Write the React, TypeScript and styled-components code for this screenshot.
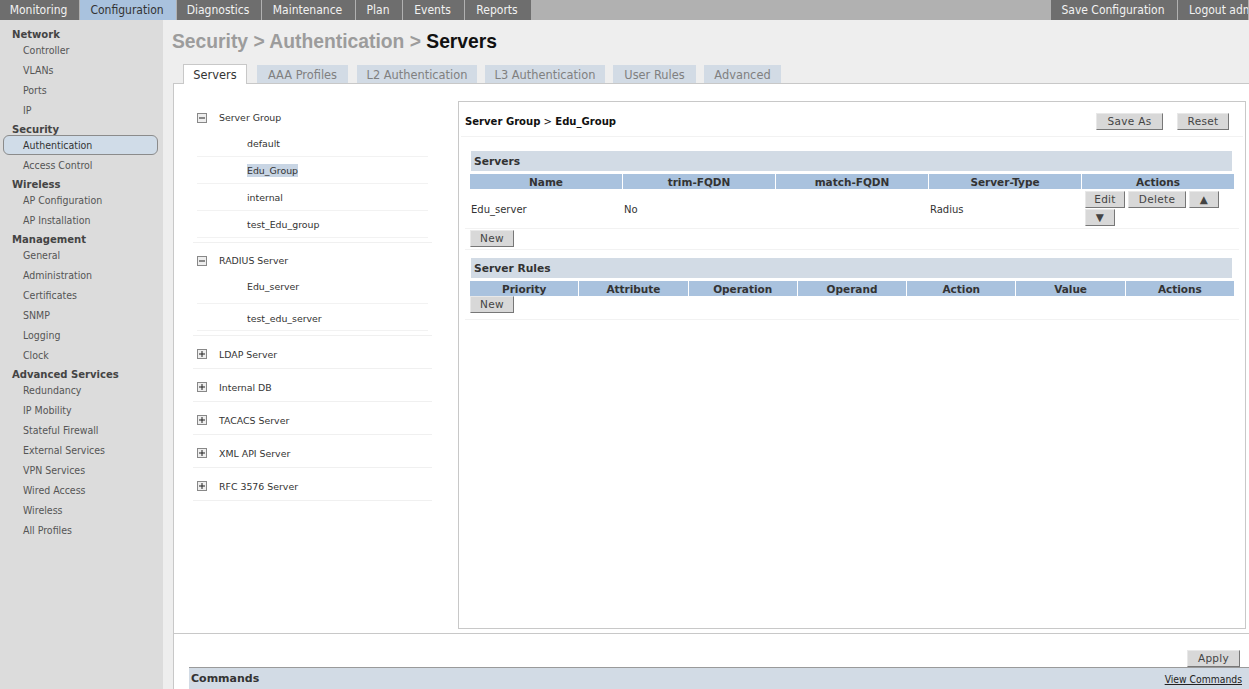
import React from "react";
import styled, { createGlobalStyle } from "styled-components";

const narrow = `"DejaVu Sans Condensed", "DejaVu Sans", Verdana, sans-serif`;

const GlobalStyle = createGlobalStyle`
  html, body {
    margin: 0;
    padding: 0;
    height: 100%;
    overflow: hidden;
    background: #fff;
    font-family: "DejaVu Sans", Verdana, sans-serif;
    font-size: 10px;
    color: #333;
  }
  * { box-sizing: border-box; }
`;

const Page = styled.div`
  width: 1249px;
  height: 689px;
  display: flex;
  flex-direction: column;
  overflow: hidden;
`;

const TopNav = styled.div`
  height: 20px;
  flex: none;
  display: flex;
  background: #b1b1b1;
`;

const NavTab = styled.div<{ $w: number; $active?: boolean; $left?: boolean }>`
  width: ${(p) => p.$w}px;
  flex: none;
  margin-right: 1px;
  padding: ${(p) => (p.$left ? "0 0 0 11px" : "0 2px 0 0")};
  text-align: ${(p) => (p.$left ? "left" : "center")};
  line-height: 21px;
  font-family: ${narrow};
  font-size: 12px;
  white-space: nowrap;
  overflow: hidden;
  background: ${(p) => (p.$active ? "#a9c2de" : "#6e6e6e")};
  color: ${(p) => (p.$active ? "#333" : "#f2f2f2")};
`;

const NavSpacer = styled.div`
  flex: 1;
`;

const Body = styled.div`
  flex: 1;
  display: flex;
  min-height: 0;
`;

const Sidebar = styled.nav`
  width: 163px;
  flex: none;
  padding-top: 5px;
  background: #dcdcdc;
`;

const SideHeading = styled.div`
  height: 15px;
  padding-left: 12px;
  line-height: 19px;
  font-family: ${narrow};
  font-size: 11.2px;
  font-weight: bold;
  color: #444;
  white-space: nowrap;
`;

const SideItem = styled.div<{ $active?: boolean }>`
  height: 20px;
  padding-left: 19px;
  margin: 0 5px 0 3px;
  line-height: 18px;
  font-family: ${narrow};
  font-size: 10.5px;
  color: ${(p) => (p.$active ? "#333" : "#555")};
  white-space: nowrap;
  border-radius: 6px;
  border: 1px solid ${(p) => (p.$active ? "#8b8b8b" : "transparent")};
  background: ${(p) => (p.$active ? "#d0dce8" : "transparent")};
`;

const Main = styled.main`
  flex: 1;
  display: flex;
  flex-direction: column;
  min-width: 0;
  background: #eee;
  padding-left: 10px;
`;

const Title = styled.h1`
  height: 44px;
  flex: none;
  margin: 0 0 0 -1px;
  line-height: 43px;
  font-family: "Liberation Sans", Arial, sans-serif;
  font-size: 19.3px;
  font-weight: bold;
  color: #9c9c9c;
  white-space: nowrap;
`;

const TitleCurrent = styled.span`
  color: #111;
`;

const TabRow = styled.div`
  height: 19px;
  flex: none;
  display: flex;
  align-items: flex-end;
  padding-left: 10px;
`;

const Tab = styled.div<{ $w: number; $gap: number; $active?: boolean }>`
  width: ${(p) => p.$w}px;
  margin-right: ${(p) => p.$gap}px;
  flex: none;
  text-align: center;
  font-size: 11.4px;
  white-space: nowrap;
  height: ${(p) => (p.$active ? "20px" : "18px")};
  line-height: ${(p) => (p.$active ? "20px" : "21px")};
  background: ${(p) => (p.$active ? "#fff" : "#d2dbe5")};
  color: ${(p) => (p.$active ? "#333" : "#808080")};
  ${(p) =>
    p.$active &&
    "border: 1px solid #c8c8c8; border-bottom: none; position: relative; z-index: 1; margin-bottom: -1px;"}
`;

const Panel = styled.div`
  height: 551px;
  flex: none;
  display: flex;
  align-items: flex-start;
  padding-right: 3px;
  background: #fff;
  border-top: 1px solid #c8c8c8;
  border-left: 1px solid #c8c8c8;
  border-bottom: 1px solid #c8c8c8;
`;

const Tree = styled.div`
  width: 258px;
  flex: none;
  margin: 21px 26px 0 0;
  padding-left: 19px;
`;

const TreeGroup = styled.div<{ $pb?: number }>`
  padding-bottom: ${(p) => p.$pb ?? 0}px;
  border-bottom: 1px solid #f0f0f0;
`;

const TreeHeader = styled.div<{ $h: number; $pt?: number }>`
  height: ${(p) => p.$h}px;
  padding-top: ${(p) => p.$pt ?? 0}px;
  display: flex;
  align-items: center;
  gap: 12px;
  padding-left: 4px;
  font-size: 9.4px;
  color: #333;
`;

const ToggleIcon = styled.svg`
  width: 10px;
  height: 10px;
  flex: none;
`;

const TreeChild = styled.div<{ $h: number; $pb?: number; $pt?: number }>`
  height: ${(p) => p.$h}px;
  padding-bottom: ${(p) => p.$pb ?? 0}px;
  padding-top: ${(p) => p.$pt ?? 0}px;
  margin: 0 4px;
  display: flex;
  align-items: center;
  padding-left: 50px;
  font-size: 9.4px;
  color: #333;
  border-bottom: 1px solid #f2f2f2;
`;

const Selected = styled.span`
  padding: 1px 0;
  background: #c8d5e4;
`;

const Detail = styled.section`
  flex: 1;
  height: 528px;
  margin-top: 17px;
  border: 1px solid #c8c8c8;
`;

const DetailHead = styled.div`
  height: 35px;
  display: flex;
  align-items: center;
  margin: 0 2px;
  padding: 4px 14px 0 4px;
  border-bottom: 1px solid #f2f2f2;
`;

const DetailTitle = styled.div`
  flex: 1;
  font-family: ${narrow};
  font-size: 11.2px;
  color: #111;
`;

const DetailStrong = styled.span`
  font-weight: bold;
`;

const Button = styled.button<{ $w: number; $mr?: number }>`
  width: ${(p) => p.$w}px;
  height: 17px;
  margin: 0 ${(p) => p.$mr ?? 0}px 0 0;
  padding: 0;
  flex: none;
  font-family: inherit;
  font-size: 10.5px;
  line-height: 15px;
  letter-spacing: 0.3px;
  color: #444;
  background: #d8d8d8;
  border: 1px solid;
  border-color: #e8e8e8 #777 #777 #e8e8e8;
`;

const Section = styled.div<{ $pt: number }>`
  padding: ${(p) => p.$pt}px 6px 0;
`;

const SectionBar = styled.h2`
  height: 20px;
  margin: 0 7px 3px 6px;
  padding-left: 3px;
  line-height: 21px;
  font-size: 10.7px;
  font-weight: bold;
  color: #333;
  background: #d2dbe5;
`;

const HeaderGrid = styled.div<{ $cols: number }>`
  display: grid;
  grid-template-columns: repeat(${(p) => p.$cols}, 1fr);
  gap: 1px;
  margin: 0 5px;
`;

const HeaderCell = styled.div`
  height: 15px;
  line-height: 16px;
  text-align: center;
  font-size: 10.5px;
  font-weight: bold;
  color: #333;
  background: #a9c2de;
`;

const DataRow = styled.div`
  display: grid;
  grid-template-columns: repeat(5, 1fr);
  gap: 1px;
  height: 40px;
  padding: 0 5px;
  align-items: center;
  border-bottom: 1px solid #f2f2f2;
`;

const DataCell = styled.div`
  padding-left: 1px;
  font-size: 10px;
  color: #333;
`;

const ActionCell = styled.div`
  display: flex;
  flex-wrap: wrap;
  align-content: flex-start;
  gap: 1px 3px;
  padding: 2px 0 0 3px;
  height: 40px;
`;

const NewRow = styled.div<{ $h: number; $pt: number }>`
  height: ${(p) => p.$h}px;
  padding: ${(p) => p.$pt}px 5px 0;
  border-bottom: 1px solid #f2f2f2;
`;

const Footer = styled.div`
  flex: 1;
  display: flex;
  flex-direction: column;
  justify-content: flex-end;
  background: #fff;
  border-left: 1px solid #c8c8c8;
  padding-left: 15px;
  min-height: 0;
`;

const ApplyRow = styled.div`
  display: flex;
  justify-content: flex-end;
  padding-right: 9px;
`;

const CommandBar = styled.div`
  height: 22px;
  flex: none;
  display: flex;
  align-items: center;
  justify-content: space-between;
  padding: 0 7px 0 2px;
  background: #d2dbe5;
  border-top: 1px solid #9a9a9a;
`;

const CommandTitle = styled.div`
  font-size: 11px;
  font-weight: bold;
  color: #333;
`;

const CommandLink = styled.a`
  font-family: ${narrow};
  font-size: 10.3px;
  color: #222;
  text-decoration: underline;
`;

const Toggle = ({ open }: { open?: boolean }) => (
  <ToggleIcon viewBox="0 0 10 10">
    <rect x="0.5" y="0.5" width="9" height="9" fill="#eee" stroke="#888" />
    <path d={open ? "M2 5h6" : "M2 5h6M5 2v6"} stroke="#222" strokeWidth="1" />
  </ToggleIcon>
);

const navTabs = [
  { label: "Monitoring", w: 79 },
  { label: "Configuration", w: 96, active: true },
  { label: "Diagnostics", w: 84 },
  { label: "Maintenance", w: 93 },
  { label: "Plan", w: 46 },
  { label: "Events", w: 61 },
  { label: "Reports", w: 66 },
];

const sideNav = [
  { title: "Network", items: ["Controller", "VLANs", "Ports", "IP"] },
  { title: "Security", items: ["Authentication", "Access Control"] },
  { title: "Wireless", items: ["AP Configuration", "AP Installation"] },
  { title: "Management", items: ["General", "Administration", "Certificates", "SNMP", "Logging", "Clock"] },
  {
    title: "Advanced Services",
    items: ["Redundancy", "IP Mobility", "Stateful Firewall", "External Services", "VPN Services", "Wired Access", "Wireless", "All Profiles"],
  },
];

const pageTabs = [
  { label: "Servers", w: 64, gap: 10, active: true },
  { label: "AAA Profiles", w: 91, gap: 9 },
  { label: "L2 Authentication", w: 120, gap: 8 },
  { label: "L3 Authentication", w: 120, gap: 8 },
  { label: "User Rules", w: 83, gap: 8 },
  { label: "Advanced", w: 77, gap: 0 },
];

const closedGroups = ["LDAP Server", "Internal DB", "TACACS Server", "XML API Server", "RFC 3576 Server"];

export default function App() {
  return (
    <Page>
      <GlobalStyle />
      <TopNav>
        {navTabs.map((t) => (
          <NavTab key={t.label} $w={t.w} $active={t.active}>
            {t.label}
          </NavTab>
        ))}
        <NavSpacer />
        <NavTab $w={126}>Save Configuration</NavTab>
        <NavTab $w={70} $left>Logout admin</NavTab>
      </TopNav>
      <Body>
        <Sidebar>
          {sideNav.map((g) => (
            <div key={g.title}>
              <SideHeading>{g.title}</SideHeading>
              {g.items.map((i) => (
                <SideItem key={i} $active={i === "Authentication"}>
                  {i}
                </SideItem>
              ))}
            </div>
          ))}
        </Sidebar>
        <Main>
          <Title>
            Security &gt; Authentication &gt; <TitleCurrent>Servers</TitleCurrent>
          </Title>
          <TabRow>
            {pageTabs.map((t) => (
              <Tab key={t.label} $w={t.w} $gap={t.gap} $active={t.active}>
                {t.label}
              </Tab>
            ))}
          </TabRow>
          <Panel>
            <Tree>
              <TreeGroup $pb={4}>
                <TreeHeader $h={25}>
                  <Toggle open />
                  Server Group
                </TreeHeader>
                <TreeChild $h={27}>default</TreeChild>
                <TreeChild $h={27}>
                  <Selected>Edu_Group</Selected>
                </TreeChild>
                <TreeChild $h={27}>internal</TreeChild>
                <TreeChild $h={27}>test_Edu_group</TreeChild>
              </TreeGroup>
              <TreeGroup $pb={4}>
                <TreeHeader $h={30} $pt={5}>
                  <Toggle open />
                  RADIUS Server
                </TreeHeader>
                <TreeChild $h={31} $pb={4}>Edu_server</TreeChild>
                <TreeChild $h={27} $pt={2}>test_edu_server</TreeChild>
              </TreeGroup>
              {closedGroups.map((g) => (
                <TreeGroup key={g}>
                  <TreeHeader $h={32} $pt={4}>
                    <Toggle />
                    {g}
                  </TreeHeader>
                </TreeGroup>
              ))}
            </Tree>
            <Detail>
              <DetailHead>
                <DetailTitle>
                  <DetailStrong>Server Group</DetailStrong> &gt; <DetailStrong>Edu_Group</DetailStrong>
                </DetailTitle>
                <Button $w={67} $mr={14}>Save As</Button>
                <Button $w={52}>Reset</Button>
              </DetailHead>
              <Section $pt={14}>
                <SectionBar>Servers</SectionBar>
                <HeaderGrid $cols={5}>
                  {["Name", "trim-FQDN", "match-FQDN", "Server-Type", "Actions"].map((h) => (
                    <HeaderCell key={h}>{h}</HeaderCell>
                  ))}
                </HeaderGrid>
                <DataRow>
                  <DataCell>Edu_server</DataCell>
                  <DataCell>No</DataCell>
                  <DataCell />
                  <DataCell>Radius</DataCell>
                  <ActionCell>
                    <Button $w={40}>Edit</Button>
                    <Button $w={58}>Delete</Button>
                    <Button $w={30}>▲</Button>
                    <Button $w={30}>▼</Button>
                  </ActionCell>
                </DataRow>
                <NewRow $h={21} $pt={1}>
                  <Button $w={44}>New</Button>
                </NewRow>
              </Section>
              <Section $pt={8}>
                <SectionBar>Server Rules</SectionBar>
                <HeaderGrid $cols={7}>
                  {["Priority", "Attribute", "Operation", "Operand", "Action", "Value", "Actions"].map((h) => (
                    <HeaderCell key={h}>{h}</HeaderCell>
                  ))}
                </HeaderGrid>
                <NewRow $h={24} $pt={0}>
                  <Button $w={44}>New</Button>
                </NewRow>
              </Section>
            </Detail>
          </Panel>
          <Footer>
            <ApplyRow>
              <Button $w={53}>Apply</Button>
            </ApplyRow>
            <CommandBar>
              <CommandTitle>Commands</CommandTitle>
              <CommandLink>View Commands</CommandLink>
            </CommandBar>
          </Footer>
        </Main>
      </Body>
    </Page>
  );
}
